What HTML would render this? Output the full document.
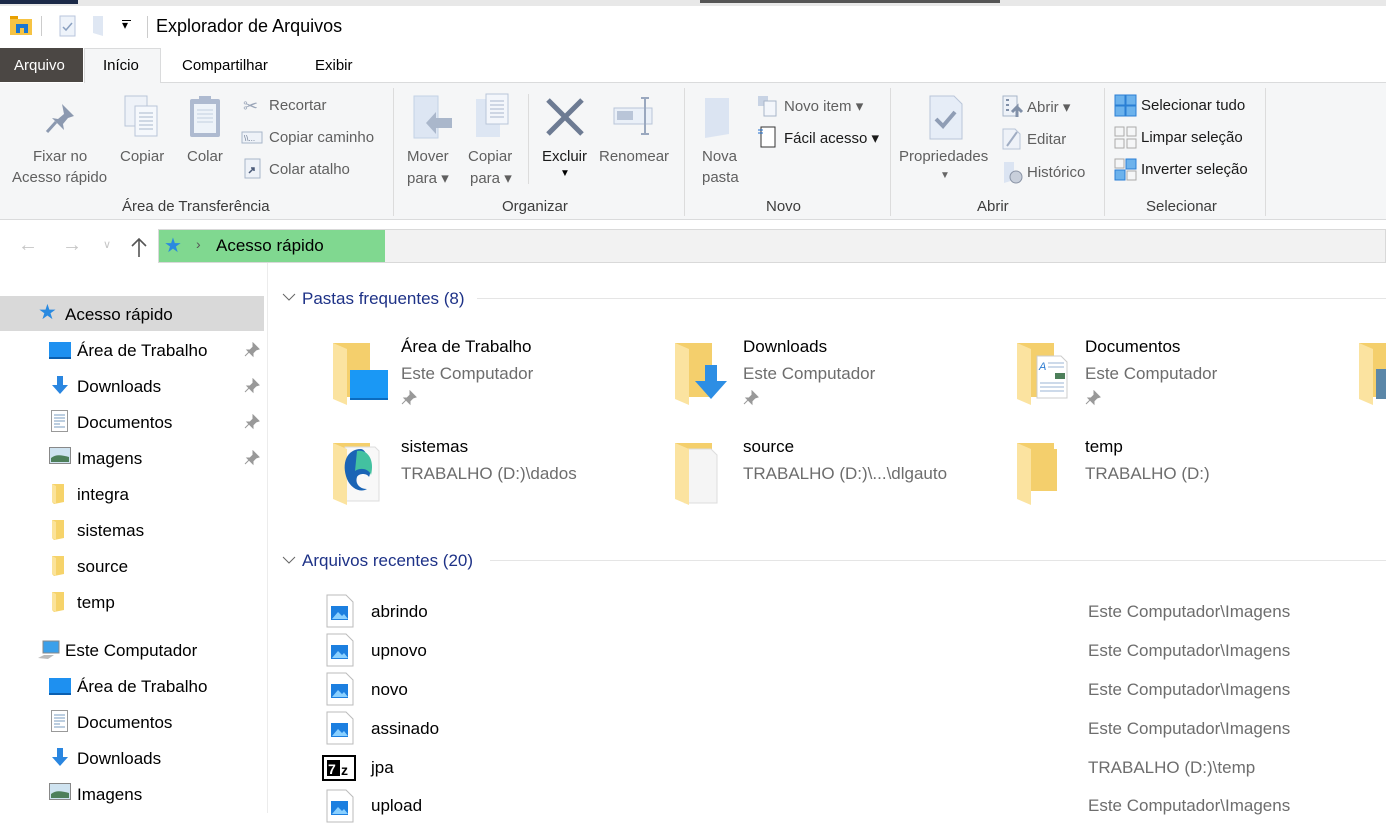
<!DOCTYPE html>
<html><head><meta charset="utf-8">
<style>
*{margin:0;padding:0;box-sizing:border-box}
body{width:1386px;height:813px;overflow:hidden;background:#fff;font-family:"Liberation Sans",sans-serif;position:relative;color:#000}
.a{position:absolute;white-space:nowrap}
.rb{font-size:15px;color:#5f5f5f}
.rbd{font-size:15px;color:#1a1a1a}
.gl{font-size:15px;color:#3c3c3c}
.sep{position:absolute;top:88px;width:1px;height:128px;background:#dcdcdc}
.sb{font-size:17px;color:#000}
.ct{font-size:17px;color:#000}
.sub{font-size:17px;color:#6d6d6d}
.hd{font-size:17px;color:#1e3287}
</style></head><body>
<div class="a" style="left:0;top:0;width:1386px;height:6px;background:#e8e8e8"></div>
<div class="a" style="left:0;top:0;width:78px;height:4px;background:#1c2a48"></div>
<div class="a" style="left:700px;top:0;width:300px;height:3px;background:#555"></div>
<svg class="a" style="left:10px;top:14px" width="24" height="22"><rect x="0" y="2" width="8" height="4" fill="#e8a000"/><rect x="0" y="5" width="22" height="16" fill="#f6c343"/><rect x="6" y="10" width="12" height="9" fill="#1976d2"/><rect x="10" y="14" width="4" height="5" fill="#f6c343"/></svg>
<div class="a" style="left:41px;top:16px;width:1px;height:20px;background:#ccc"></div>
<svg class="a" style="left:58px;top:15px" width="20" height="22"><rect x="2" y="1" width="15" height="20" fill="#eef3fa" stroke="#b8c6dc"/><path d="M5 12l3 3 6-7" stroke="#8aa0c0" stroke-width="1.5" fill="none"/></svg>
<svg class="a" style="left:92px;top:15px" width="14" height="22"><path d="M1 1h10v20l-10-3z" fill="#dfe7f3"/></svg>
<div class="a" style="left:122px;top:18px;font-size:12px">&#9662;</div>
<div class="a" style="left:122px;top:20px;width:9px;height:1px;background:#000"></div>
<div class="a" style="left:147px;top:16px;width:1px;height:22px;background:#ccc"></div>
<div class="a" style="left:156px;top:16px;font-size:18px;color:#000">Explorador de Arquivos</div>
<div class="a" style="left:0;top:48px;width:83px;height:34px;background:#4b4744"></div>
<div class="a" style="left:14px;top:57px;font-size:15px;color:#fff">Arquivo</div>
<div class="a" style="left:84px;top:48px;width:77px;height:35px;background:#f5f6f7;border:1px solid #dadbdc;border-bottom:none"></div>
<div class="a" style="left:103px;top:57px;font-size:15px">Início</div>
<div class="a" style="left:182px;top:57px;font-size:15px">Compartilhar</div>
<div class="a" style="left:315px;top:57px;font-size:15px">Exibir</div>
<div class="a" style="left:161px;top:82px;width:1225px;height:1px;background:#dadbdc"></div>
<div class="a" style="left:0;top:83px;width:1386px;height:137px;background:#f5f6f7;border-bottom:1px solid #dadbdc"></div>
<div class="sep" style="left:393px"></div><div class="sep" style="left:684px"></div><div class="sep" style="left:890px"></div><div class="sep" style="left:1104px"></div><div class="sep" style="left:1265px"></div>
<div class="sep" style="left:528px;top:94px;height:90px"></div>
<svg class="a" style="left:44px;top:100px" width="36" height="36"><path d="M18 4l12 12-6 2-5 6 1 6-12-12 6 1 6-5z" fill="#8c99b0"/><path d="M12 22l-9 10" stroke="#8c99b0" stroke-width="3"/></svg>
<div class="a rb" style="left:33px;top:148px">Fixar no</div>
<div class="a rb" style="left:12px;top:169px">Acesso rápido</div>
<svg class="a" style="left:124px;top:95px" width="40" height="46"><rect x="1" y="1" width="22" height="30" fill="#eef2f8" stroke="#b9c5d8"/><rect x="11" y="11" width="22" height="30" fill="#f5f8fc" stroke="#b9c5d8"/><path d="M15 18h14M15 22h14M15 26h14M15 30h14M15 34h14" stroke="#a9b7cd"/></svg>
<div class="a rb" style="left:120px;top:148px">Copiar</div>
<svg class="a" style="left:188px;top:94px" width="36" height="46"><rect x="2" y="5" width="30" height="38" rx="2" fill="#aebad0"/><rect x="6" y="10" width="22" height="29" fill="#eef3f9"/><rect x="11" y="2" width="12" height="7" fill="#aebad0"/><path d="M9 16h16M9 20h16M9 24h16M9 28h16" stroke="#c3cfe0"/></svg>
<div class="a rb" style="left:187px;top:148px">Colar</div>
<div class="a" style="left:243px;top:96px;font-size:18px;color:#9aa5b8">&#9986;</div>
<div class="a rb" style="left:269px;top:97px">Recortar</div>
<svg class="a" style="left:241px;top:131px" width="22" height="13"><rect x="1" y="1" width="20" height="11" fill="#eef2f8" stroke="#a8b5c9"/><text x="3" y="10" font-size="8" fill="#6a7890" font-family="Liberation Sans">\\...</text></svg>
<div class="a rb" style="left:269px;top:129px">Copiar caminho</div>
<svg class="a" style="left:244px;top:158px" width="18" height="22"><rect x="1" y="1" width="15" height="19" fill="#eef2f8" stroke="#a8b5c9"/><path d="M5 15l5-5m-3 0h3v3" stroke="#4a5a78" stroke-width="1.5" fill="none"/></svg>
<div class="a rb" style="left:269px;top:161px">Colar atalho</div>
<div class="a gl" style="left:122px;top:198px">Área de Transferência</div>
<svg class="a" style="left:412px;top:95px" width="44" height="46"><rect x="2" y="1" width="24" height="42" fill="#dde6f3" stroke="#c4d2e6"/><path d="M14 28l10-11v6h16v10H24v6z" fill="#aab7cb"/></svg>
<div class="a rb" style="left:407px;top:148px">Mover</div><div class="a rb" style="left:407px;top:169px">para &#9662;</div>
<svg class="a" style="left:474px;top:93px" width="44" height="46"><rect x="2" y="6" width="24" height="38" fill="#dde6f3"/><rect x="12" y="1" width="22" height="30" fill="#f3f6fb" stroke="#b9c5d8"/><path d="M16 8h14M16 12h14M16 16h14M16 20h14M16 24h14" stroke="#a9b7cd"/></svg>
<div class="a rb" style="left:468px;top:148px">Copiar</div><div class="a rb" style="left:470px;top:169px">para &#9662;</div>
<svg class="a" style="left:544px;top:97px" width="42" height="40"><path d="M4 3l34 34M38 3L4 37" stroke="#6d7b93" stroke-width="5"/></svg>
<div class="a rbd" style="left:542px;top:148px">Excluir</div><div class="a" style="left:560px;top:168px;font-size:10px">&#9660;</div>
<svg class="a" style="left:612px;top:96px" width="46" height="40"><rect x="2" y="12" width="38" height="16" fill="#eaf0f8" stroke="#b9c5d8"/><rect x="5" y="15" width="16" height="9" fill="#b9c5d8"/><path d="M29 2h8M33 2v36M29 38h8" stroke="#9aa8bf" stroke-width="2"/></svg>
<div class="a rb" style="left:599px;top:148px">Renomear</div>
<div class="a gl" style="left:502px;top:198px">Organizar</div>
<svg class="a" style="left:703px;top:96px" width="30" height="44"><path d="M2 2h24v36L2 42z" fill="#dbe4f2"/></svg>
<div class="a rb" style="left:702px;top:148px">Nova</div><div class="a rb" style="left:702px;top:169px">pasta</div>
<svg class="a" style="left:757px;top:95px" width="22" height="22"><rect x="1" y="1" width="10" height="10" fill="#c8d3e4"/><rect x="7" y="6" width="12" height="15" fill="#f3f6fb" stroke="#a8b5c9"/></svg>
<div class="a rb" style="left:784px;top:97px">Novo item &#9662;</div>
<svg class="a" style="left:757px;top:126px" width="20" height="22"><rect x="4" y="1" width="14" height="20" fill="#fff" stroke="#333"/><path d="M1 4h5M1 7h5" stroke="#1e6fd0"/></svg>
<div class="a rbd" style="left:784px;top:129px">Fácil acesso &#9662;</div>
<div class="a gl" style="left:766px;top:198px">Novo</div>
<svg class="a" style="left:928px;top:95px" width="36" height="46"><path d="M2 1h24l8 8v35H2z" fill="#e6edf7" stroke="#b9c5d8"/><path d="M8 24l7 7 12-14" stroke="#8f9db5" stroke-width="4" fill="none"/></svg>
<div class="a rb" style="left:899px;top:148px">Propriedades</div><div class="a" style="left:940px;top:170px;font-size:10px;color:#666">&#9660;</div>
<svg class="a" style="left:1002px;top:95px" width="22" height="24"><rect x="1" y="1" width="14" height="20" fill="#eef2f8" stroke="#a8b5c9"/><path d="M4 5h3M4 10h3M4 15h3" stroke="#8190a8" stroke-width="2"/><path d="M15 22v-10l-5 5m5-5 5 5" stroke="#8190a8" stroke-width="3" fill="none"/></svg>
<div class="a rb" style="left:1027px;top:98px">Abrir &#9662;</div>
<svg class="a" style="left:1002px;top:128px" width="20" height="22"><path d="M1 1h12l5 5v15H1z" fill="#eef2f8" stroke="#b9c5d8"/><path d="M5 18l10-14" stroke="#a0adc3" stroke-width="2"/></svg>
<div class="a rb" style="left:1027px;top:131px">Editar</div>
<svg class="a" style="left:1002px;top:161px" width="22" height="24"><path d="M2 1h10v18L2 22z" fill="#dbe4f2"/><circle cx="14" cy="16" r="6" fill="#c8cfdb" stroke="#8a94a6"/></svg>
<div class="a rb" style="left:1027px;top:164px">Histórico</div>
<div class="a gl" style="left:977px;top:198px">Abrir</div>
<svg class="a" style="left:1114px;top:94px" width="24" height="24"><rect x="1" y="1" width="10" height="10" fill="#6cb2ec" stroke="#2a7fd4"/><rect x="12" y="1" width="10" height="10" fill="#6cb2ec" stroke="#2a7fd4"/><rect x="1" y="12" width="10" height="10" fill="#6cb2ec" stroke="#2a7fd4"/><rect x="12" y="12" width="10" height="10" fill="#6cb2ec" stroke="#2a7fd4"/></svg>
<div class="a rbd" style="left:1141px;top:97px">Selecionar tudo</div>
<svg class="a" style="left:1114px;top:126px" width="24" height="24"><g fill="none" stroke="#aaa"><rect x="1" y="1" width="9" height="9"/><rect x="13" y="1" width="9" height="9"/><rect x="1" y="13" width="9" height="9"/><rect x="13" y="13" width="9" height="9"/></g></svg>
<div class="a rbd" style="left:1141px;top:129px">Limpar seleção</div>
<svg class="a" style="left:1114px;top:158px" width="24" height="24"><rect x="1" y="1" width="9" height="9" fill="none" stroke="#aaa"/><rect x="12" y="1" width="10" height="10" fill="#6cb2ec" stroke="#2a7fd4"/><rect x="1" y="12" width="10" height="10" fill="#6cb2ec" stroke="#2a7fd4"/><rect x="13" y="13" width="9" height="9" fill="none" stroke="#aaa"/></svg>
<div class="a rbd" style="left:1141px;top:161px">Inverter seleção</div>
<div class="a gl" style="left:1146px;top:198px">Selecionar</div>
<div class="a" style="left:18px;top:234px;font-size:20px;color:#c6c6c6">&#8592;</div>
<div class="a" style="left:62px;top:234px;font-size:20px;color:#c6c6c6">&#8594;</div>
<div class="a" style="left:103px;top:238px;font-size:11px;color:#c6c6c6">&#8744;</div>
<svg class="a" style="left:130px;top:236px" width="18" height="22"><path d="M9 21V3M2 10l7-7 7 7" stroke="#555" stroke-width="1.6" fill="none"/></svg>
<div class="a" style="left:158px;top:229px;width:1228px;height:34px;background:#f2f2f2;border:1px solid #d9d9d9"></div>
<div class="a" style="left:159px;top:230px;width:226px;height:32px;background:#80d890"></div>
<div class="a" style="left:164px;top:233px;font-size:20px;color:#2a8ae0">&#9733;</div>
<div class="a" style="left:196px;top:236px;font-size:14px;color:#555">&#8250;</div>
<div class="a" style="left:216px;top:236px;font-size:17px">Acesso rápido</div>
<div class="a" style="left:267px;top:263px;width:1px;height:550px;background:#ececec"></div>
<div class="a" style="left:0;top:296px;width:264px;height:35px;background:#d9d9d9"></div>
<div class="a" style="left:38px;top:300px;font-size:21px;color:#2a8ae0">&#9733;</div>
<div class="a sb" style="left:65px;top:305px">Acesso rápido</div>
<svg class="a" style="left:49px;top:341px" width="22" height="18"><rect x="0" y="1" width="22" height="16" fill="#1e90f0"/><path d="M0 17h22" stroke="#0b5fb0" stroke-width="2"/></svg>
<div class="a sb" style="left:77px;top:341px">Área de Trabalho</div>
<svg class="a" style="left:50px;top:375px" width="20" height="20"><path d="M7 1h6v9h5l-8 9-8-9h5z" fill="#2a86e0"/></svg>
<div class="a sb" style="left:77px;top:377px">Downloads</div>
<svg class="a" style="left:51px;top:410px" width="18" height="22"><rect x="0.5" y="0.5" width="16" height="21" fill="#fff" stroke="#999"/><path d="M3 5h11M3 8h11M3 11h11M3 14h6M3 17h11" stroke="#7a9cc0"/></svg>
<div class="a sb" style="left:77px;top:413px">Documentos</div>
<svg class="a" style="left:49px;top:447px" width="22" height="18"><rect x="0.5" y="0.5" width="21" height="16" fill="#cfe3f0" stroke="#888"/><path d="M2 11c5-4 10-3 18-1v5H2z" fill="#4d7f5a"/></svg>
<div class="a sb" style="left:77px;top:449px">Imagens</div>
<svg class="a" style="left:244px;top:342px" width="16" height="16"><path d="M9 1l6 6-3 1-3 3 0 3-6-6 3 0 3-3z M5 10l-4 4" fill="#999" stroke="#999"/></svg>
<svg class="a" style="left:244px;top:378px" width="16" height="16"><path d="M9 1l6 6-3 1-3 3 0 3-6-6 3 0 3-3z M5 10l-4 4" fill="#999" stroke="#999"/></svg>
<svg class="a" style="left:244px;top:414px" width="16" height="16"><path d="M9 1l6 6-3 1-3 3 0 3-6-6 3 0 3-3z M5 10l-4 4" fill="#999" stroke="#999"/></svg>
<svg class="a" style="left:244px;top:450px" width="16" height="16"><path d="M9 1l6 6-3 1-3 3 0 3-6-6 3 0 3-3z M5 10l-4 4" fill="#999" stroke="#999"/></svg>
<svg class="a" style="left:52px;top:484px" width="14" height="20"><path d="M0 0h12v18L2 20 0 18z" fill="#f6d36a"/><path d="M0 0l4 2v18L0 18z" fill="#fbe39a"/></svg>
<div class="a sb" style="left:77px;top:485px">integra</div>
<svg class="a" style="left:52px;top:520px" width="14" height="20"><path d="M0 0h12v18L2 20 0 18z" fill="#f6d36a"/><path d="M0 0l4 2v18L0 18z" fill="#fbe39a"/></svg>
<div class="a sb" style="left:77px;top:521px">sistemas</div>
<svg class="a" style="left:52px;top:556px" width="14" height="20"><path d="M0 0h12v18L2 20 0 18z" fill="#f6d36a"/><path d="M0 0l4 2v18L0 18z" fill="#fbe39a"/></svg>
<div class="a sb" style="left:77px;top:557px">source</div>
<svg class="a" style="left:52px;top:592px" width="14" height="20"><path d="M0 0h12v18L2 20 0 18z" fill="#f6d36a"/><path d="M0 0l4 2v18L0 18z" fill="#fbe39a"/></svg>
<div class="a sb" style="left:77px;top:593px">temp</div>
<svg class="a" style="left:37px;top:640px" width="24" height="22"><rect x="6" y="1" width="16" height="12" fill="#3ba0ea" stroke="#888"/><path d="M1 18l6-3h10l-6 4z" fill="#bbb"/></svg>
<div class="a sb" style="left:65px;top:641px">Este Computador</div>
<svg class="a" style="left:49px;top:677px" width="22" height="18"><rect x="0" y="1" width="22" height="16" fill="#1e90f0"/><path d="M0 17h22" stroke="#0b5fb0" stroke-width="2"/></svg>
<div class="a sb" style="left:77px;top:677px">Área de Trabalho</div>
<svg class="a" style="left:51px;top:710px" width="18" height="22"><rect x="0.5" y="0.5" width="16" height="21" fill="#fff" stroke="#999"/><path d="M3 5h11M3 8h11M3 11h11M3 14h6M3 17h11" stroke="#7a9cc0"/></svg>
<div class="a sb" style="left:77px;top:713px">Documentos</div>
<svg class="a" style="left:50px;top:747px" width="20" height="20"><path d="M7 1h6v9h5l-8 9-8-9h5z" fill="#2a86e0"/></svg>
<div class="a sb" style="left:77px;top:749px">Downloads</div>
<svg class="a" style="left:49px;top:783px" width="22" height="18"><rect x="0.5" y="0.5" width="21" height="16" fill="#cfe3f0" stroke="#888"/><path d="M2 11c5-4 10-3 18-1v5H2z" fill="#4d7f5a"/></svg>
<div class="a sb" style="left:77px;top:785px">Imagens</div>
<svg class="a" style="left:282px;top:292px" width="14" height="10"><path d="M1 2l6 6 6-6" stroke="#666" fill="none"/></svg>
<div class="a hd" style="left:302px;top:289px">Pastas frequentes (8)</div>
<div class="a" style="left:477px;top:298px;width:909px;height:1px;background:#e5e5e5"></div>
<svg class="a" style="left:282px;top:555px" width="14" height="10"><path d="M1 2l6 6 6-6" stroke="#666" fill="none"/></svg>
<div class="a hd" style="left:302px;top:551px">Arquivos recentes (20)</div>
<div class="a" style="left:490px;top:560px;width:896px;height:1px;background:#e5e5e5"></div>
<svg class="a" style="left:333px;top:341px" width="58" height="64"><path d="M0 2h37v54H6L0 58z" fill="#f4cf6c"/><path d="M0 2l14 6v56L0 58z" fill="#fbe3a0"/><rect x="17" y="29" width="38" height="30" fill="#1a98f5"/><path d="M17 58h38" stroke="#0b6cc0" stroke-width="2"/></svg>
<div class="a ct" style="left:401px;top:337px">Área de Trabalho</div>
<div class="a sub" style="left:401px;top:364px">Este Computador</div>
<svg class="a" style="left:401px;top:390px" width="16" height="16"><path d="M9 1l6 6-3 1-3 3 0 3-6-6 3 0 3-3z M5 10l-4 4" fill="#999" stroke="#999"/></svg>
<svg class="a" style="left:675px;top:341px" width="58" height="64"><path d="M0 2h37v54H6L0 58z" fill="#f4cf6c"/><path d="M0 2l14 6v56L0 58z" fill="#fbe3a0"/><path d="M30 24h12v16h10L36 58 20 40h10z" fill="#2d8ee4"/></svg>
<div class="a ct" style="left:743px;top:337px">Downloads</div>
<div class="a sub" style="left:743px;top:364px">Este Computador</div>
<svg class="a" style="left:743px;top:390px" width="16" height="16"><path d="M9 1l6 6-3 1-3 3 0 3-6-6 3 0 3-3z M5 10l-4 4" fill="#999" stroke="#999"/></svg>
<svg class="a" style="left:1017px;top:341px" width="58" height="64"><path d="M0 2h37v54H6L0 58z" fill="#f4cf6c"/><path d="M0 2l14 6v56L0 58z" fill="#fbe3a0"/><path d="M20 15h24l6 6v36H20z" fill="#fff" stroke="#ccc"/><text x="22" y="29" font-size="11" fill="#2a7ad0" font-style="italic">A</text><path d="M31 22h16M31 26h16M23 42h24M23 46h24M23 50h24" stroke="#9bb5d5"/><rect x="38" y="32" width="10" height="6" fill="#4d7f5a"/></svg>
<div class="a ct" style="left:1085px;top:337px">Documentos</div>
<div class="a sub" style="left:1085px;top:364px">Este Computador</div>
<svg class="a" style="left:1085px;top:390px" width="16" height="16"><path d="M9 1l6 6-3 1-3 3 0 3-6-6 3 0 3-3z M5 10l-4 4" fill="#999" stroke="#999"/></svg>
<svg class="a" style="left:1359px;top:341px" width="27" height="64"><path d="M0 2h27v54H6L0 58z" fill="#f4cf6c"/><path d="M0 2l14 6v56L0 58z" fill="#fbe3a0"/><rect x="17" y="28" width="10" height="30" fill="#5b87a8"/></svg>
<svg class="a" style="left:333px;top:441px" width="58" height="64"><path d="M0 2h37v54H6L0 58z" fill="#f4cf6c"/><path d="M12 6h30l4 4v50H12z" fill="#f8f8f8" stroke="#ddd"/><path d="M0 2l14 6v56L0 58z" fill="#fbe3a0"/><path d="M28 8c-14 0-20 14-14 30 4 10 14 14 20 10-8 0-12-6-10-12 2-4 10-4 12 0 4-8-2-28-8-28z" fill="#1a64b5"/><path d="M24 10c10-2 18 8 14 24-2-6-10-8-16-4z" fill="#43c1a0"/></svg>
<div class="a ct" style="left:401px;top:437px">sistemas</div>
<div class="a sub" style="left:401px;top:464px">TRABALHO (D:)\dados</div>
<svg class="a" style="left:675px;top:441px" width="58" height="64"><path d="M0 2h37v54H6L0 58z" fill="#f4cf6c"/><path d="M10 8h26l6 6v48H10z" fill="#f5f5f5" stroke="#ddd"/><path d="M0 2l14 6v56L0 58z" fill="#fbe3a0"/></svg>
<div class="a ct" style="left:743px;top:437px">source</div>
<div class="a sub" style="left:743px;top:464px">TRABALHO (D:)\...\dlgauto</div>
<svg class="a" style="left:1017px;top:441px" width="58" height="64"><path d="M0 2h37v48H6L0 58z" fill="#f4cf6c"/><path d="M0 2l14 6v56L0 58z" fill="#fbe3a0"/><path d="M14 8h26v42H14z" fill="#f4cf6c"/></svg>
<div class="a ct" style="left:1085px;top:437px">temp</div>
<div class="a sub" style="left:1085px;top:464px">TRABALHO (D:)</div>
<svg class="a" style="left:326px;top:594px" width="28" height="34"><path d="M1 1h19l7 7v25H1z" fill="#fff" stroke="#bbb"/><rect x="5" y="12" width="17" height="14" fill="#1c7fe0"/><path d="M6 25l6-7 4 4 2-2 4 5z" fill="#8ad0ff"/></svg>
<div class="a ct" style="left:371px;top:602px">abrindo</div>
<div class="a sub" style="left:1088px;top:602px">Este Computador\Imagens</div>
<svg class="a" style="left:326px;top:633px" width="28" height="34"><path d="M1 1h19l7 7v25H1z" fill="#fff" stroke="#bbb"/><rect x="5" y="12" width="17" height="14" fill="#1c7fe0"/><path d="M6 25l6-7 4 4 2-2 4 5z" fill="#8ad0ff"/></svg>
<div class="a ct" style="left:371px;top:641px">upnovo</div>
<div class="a sub" style="left:1088px;top:641px">Este Computador\Imagens</div>
<svg class="a" style="left:326px;top:672px" width="28" height="34"><path d="M1 1h19l7 7v25H1z" fill="#fff" stroke="#bbb"/><rect x="5" y="12" width="17" height="14" fill="#1c7fe0"/><path d="M6 25l6-7 4 4 2-2 4 5z" fill="#8ad0ff"/></svg>
<div class="a ct" style="left:371px;top:680px">novo</div>
<div class="a sub" style="left:1088px;top:680px">Este Computador\Imagens</div>
<svg class="a" style="left:326px;top:711px" width="28" height="34"><path d="M1 1h19l7 7v25H1z" fill="#fff" stroke="#bbb"/><rect x="5" y="12" width="17" height="14" fill="#1c7fe0"/><path d="M6 25l6-7 4 4 2-2 4 5z" fill="#8ad0ff"/></svg>
<div class="a ct" style="left:371px;top:719px">assinado</div>
<div class="a sub" style="left:1088px;top:719px">Este Computador\Imagens</div>
<svg class="a" style="left:322px;top:755px" width="34" height="26"><rect x="1" y="1" width="32" height="24" fill="#fff" stroke="#000" stroke-width="2"/><rect x="5" y="5" width="13" height="16" fill="#000"/><text x="6" y="19" font-size="14" font-weight="bold" fill="#fff" font-family="Liberation Sans">7</text><text x="19" y="20" font-size="14" font-weight="bold" fill="#000" font-family="Liberation Sans">z</text></svg>
<div class="a ct" style="left:371px;top:758px">jpa</div>
<div class="a sub" style="left:1088px;top:758px">TRABALHO (D:)\temp</div>
<svg class="a" style="left:326px;top:789px" width="28" height="34"><path d="M1 1h19l7 7v25H1z" fill="#fff" stroke="#bbb"/><rect x="5" y="12" width="17" height="14" fill="#1c7fe0"/><path d="M6 25l6-7 4 4 2-2 4 5z" fill="#8ad0ff"/></svg>
<div class="a ct" style="left:371px;top:796px">upload</div>
<div class="a sub" style="left:1088px;top:796px">Este Computador\Imagens</div>
</body></html>
